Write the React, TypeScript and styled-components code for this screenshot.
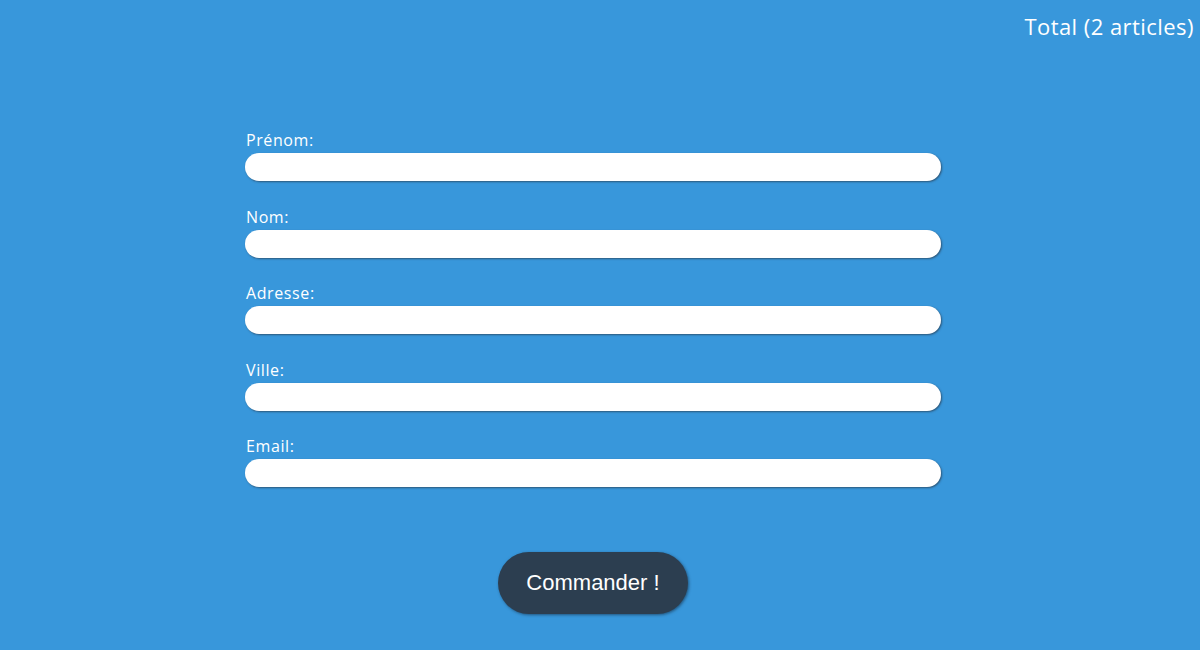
import React from "react";
import styled, { createGlobalStyle } from "styled-components";

const Global = createGlobalStyle`
  html, body { margin: 0; padding: 0; }
  body {
    background: #3897db;
    font-family: "Open Sans", "Lato", sans-serif;
    color: #ffffff;
    width: 1200px;
    height: 650px;
    overflow: hidden;
  }
`;

const Page = styled.div`
  display: flex;
  flex-direction: column;
  width: 1200px;
  height: 650px;
`;

const Header = styled.header`
  display: flex;
  justify-content: flex-end;
  padding: 11px 6px 0 0;
  height: 30px;
`;

const Total = styled.div`
  font-size: 22px;
  line-height: 30px;
  letter-spacing: 0.45px;
  color: #ffffff;
`;

const Form = styled.form`
  display: flex;
  flex-direction: column;
  align-items: center;
  width: 696px;
  margin: 89px 0 0 245px;
`;

const Fields = styled.div`
  display: flex;
  flex-direction: column;
  gap: 25.5px;
  width: 100%;
`;

const Field = styled.div`
  display: flex;
  flex-direction: column;
  gap: 3px;
`;

const Label = styled.label`
  font-size: 16px;
  line-height: 20px;
  letter-spacing: 0.6px;
  padding-left: 1px;
  color: #ffffff;
`;

const Input = styled.input`
  box-sizing: border-box;
  width: 100%;
  height: 28px;
  border: none;
  border-radius: 14px;
  background: #ffffff;
  box-shadow: 1px 1px 2px rgba(40, 60, 80, 0.7);
  outline: none;
  padding: 0 12px;
  font-size: 15px;
`;

const Button = styled.button`
  margin-top: 65px;
  width: 190px;
  height: 62px;
  border: none;
  border-radius: 31px;
  background: #2c3e50;
  color: #ffffff;
  font-family: "Liberation Sans", Arial, sans-serif;
  font-size: 22px;
  box-shadow: 1px 1px 3px rgba(20, 40, 60, 0.6);
  cursor: pointer;
`;

const fields = ["Prénom", "Nom", "Adresse", "Ville", "Email"];

export default function App() {
  return (
    <Page>
      <Global />
      <Header>
        <Total>Total (2 articles)</Total>
      </Header>
      <Form onSubmit={(e) => e.preventDefault()}>
        <Fields>
          {fields.map((f) => (
            <Field key={f}>
              <Label htmlFor={f}>{f}:</Label>
              <Input id={f} type="text" />
            </Field>
          ))}
        </Fields>
        <Button type="submit">Commander !</Button>
      </Form>
    </Page>
  );
}
